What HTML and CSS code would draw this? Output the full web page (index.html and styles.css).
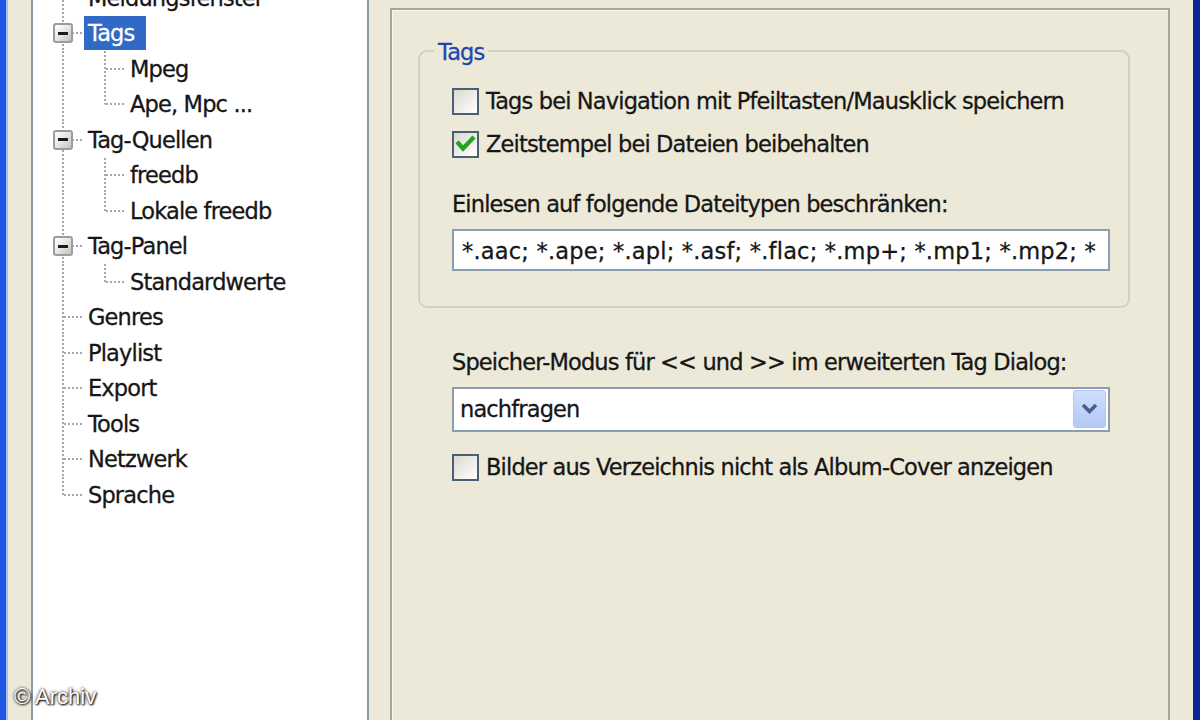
FILE: index.html
```html
<!DOCTYPE html>
<html lang="de">
<head>
<meta charset="utf-8">
<title>Optionen - Tags</title>
<link rel="stylesheet" href="styles.css">
</head>
<body>
<div class="window">
  <div class="tree">
    <div class="row"><span class="cell tee"></span><span class="label">Meldungsfenster</span></div>
    <div class="row"><span class="cell tee"><span class="exp"></span></span><span class="label sel">Tags</span></div>
    <div class="row"><span class="cell v"></span><span class="cell tee"></span><span class="label">Mpeg</span></div>
    <div class="row"><span class="cell v"></span><span class="cell end"></span><span class="label">Ape, Mpc ...</span></div>
    <div class="row"><span class="cell tee"><span class="exp"></span></span><span class="label">Tag-Quellen</span></div>
    <div class="row"><span class="cell v"></span><span class="cell tee"></span><span class="label">freedb</span></div>
    <div class="row"><span class="cell v"></span><span class="cell end"></span><span class="label">Lokale freedb</span></div>
    <div class="row"><span class="cell tee"><span class="exp"></span></span><span class="label">Tag-Panel</span></div>
    <div class="row"><span class="cell v"></span><span class="cell end"></span><span class="label">Standardwerte</span></div>
    <div class="row"><span class="cell tee"></span><span class="label">Genres</span></div>
    <div class="row"><span class="cell tee"></span><span class="label">Playlist</span></div>
    <div class="row"><span class="cell tee"></span><span class="label">Export</span></div>
    <div class="row"><span class="cell tee"></span><span class="label">Tools</span></div>
    <div class="row"><span class="cell tee"></span><span class="label">Netzwerk</span></div>
    <div class="row"><span class="cell end"></span><span class="label">Sprache</span></div>
  </div>

  <div class="panel">
    <div class="group">
      <div class="legend">Tags</div>
      <div class="check-row"><span class="chk"></span><span class="check-text">Tags bei Navigation mit Pfeiltasten/Mausklick speichern</span></div>
      <div class="check-row"><span class="chk"><svg class="tick" viewBox="0 0 27 27" width="27" height="27"><polyline points="6.5,12.5 11,17.5 20.5,7.5" fill="none" stroke="#22a322" stroke-width="4.4" stroke-linecap="square"/></svg></span><span class="check-text">Zeitstempel bei Dateien beibehalten</span></div>
      <div class="field-label first">Einlesen auf folgende Dateitypen beschränken:</div>
      <div class="textbox">*.aac; *.ape; *.apl; *.asf; *.flac; *.mp+; *.mp1; *.mp2; *</div>
    </div>

    <div class="lower">
      <div class="field-label">Speicher-Modus für &lt;&lt; und &gt;&gt; im erweiterten Tag Dialog:</div>
      <div class="combo">
        <span class="combo-text">nachfragen</span>
        <span class="combo-btn"><svg viewBox="0 0 33 38" width="33" height="38"><polyline points="10,15 16.5,21.5 23,15" fill="none" stroke="#4a5f88" stroke-width="3.6"/></svg></span>
      </div>
      <div class="check-row"><span class="chk"></span><span class="check-text">Bilder aus Verzeichnis nicht als Album-Cover anzeigen</span></div>
    </div>
  </div>

  <div class="watermark">© Archiv</div>
</div>
</body>
</html>
```

FILE: styles.css
```css
html, body {
  margin: 0;
  padding: 0;
}

body {
  width: 1200px;
  height: 720px;
  overflow: hidden;
  background: #ece9d8;
  font-family: "DejaVu Sans", "Noto Sans", sans-serif;
  font-size: 22.5px;
  letter-spacing: -0.85px;
  color: #161616;
  -webkit-text-stroke: 0.3px currentColor;
}

.window {
  position: relative;
  display: flex;
  align-items: flex-start;
  width: 1200px;
  height: 720px;
  box-sizing: border-box;
  overflow: hidden;
  background: #ece9d8;
  border-left: 6px solid #1d56e3;
  border-right: 7px solid #0b2596;
  box-shadow: inset 2px 0 0 #a9bff3;
}

/* ---------- tree ---------- */
.tree {
  flex: none;
  width: 338px;
  height: 800px;
  margin-left: 25px;
  margin-top: -22px;
  box-sizing: border-box;
  border: 2px solid #8e99a6;
  background: #ffffff;
  padding-left: 9px;
}

.row {
  display: flex;
  align-items: center;
  height: 35.5px;
}

.cell {
  flex: none;
  width: 42px;
  height: 100%;
  display: flex;
  align-items: center;
  justify-content: center;
}

.cell.v {
  background: repeating-linear-gradient(to bottom, #a8a8a8 0 2px, transparent 2px 4px) 20px 0 / 2px 100% no-repeat;
}

.cell.tee {
  background:
    repeating-linear-gradient(to right, #a8a8a8 0 2px, transparent 2px 4px) 22px 50% / 20px 2px no-repeat,
    repeating-linear-gradient(to bottom, #a8a8a8 0 2px, transparent 2px 4px) 20px 0 / 2px 100% no-repeat;
}

.cell.end {
  background:
    repeating-linear-gradient(to right, #a8a8a8 0 2px, transparent 2px 4px) 22px 50% / 20px 2px no-repeat,
    repeating-linear-gradient(to bottom, #a8a8a8 0 2px, transparent 2px 4px) 20px 0 / 2px 50% no-repeat;
}

.exp {
  width: 20px;
  height: 20px;
  box-sizing: border-box;
  border: 2px solid #949ea8;
  border-radius: 3px;
  background: linear-gradient(135deg, #ffffff 0%, #e8e6de 50%, #c6c2b5 100%);
  display: flex;
  align-items: center;
  justify-content: center;
}

.exp::after {
  content: "";
  width: 10px;
  height: 3px;
  background: #1b1b1b;
}

.label {
  height: 34px;
  line-height: 34px;
  padding: 0 12px 0 4px;
  white-space: nowrap;
}

.label.sel {
  background: #3169c6;
  color: #ffffff;
}

/* ---------- right panel ---------- */
.panel {
  flex: none;
  width: 780px;
  height: 760px;
  margin-left: 21px;
  margin-top: 8px;
  box-sizing: border-box;
  border: 2px solid #a9a699;
  box-shadow: inset 1px 1px 0 #f8f6ee;
}

.group {
  width: 712px;
  box-sizing: border-box;
  margin: 40px 0 0 26px;
  border: 2px solid #d3d0bf;
  border-radius: 9px;
  padding: 0 18px 35px 32px;
}

.legend {
  width: fit-content;
  margin: -15px 0 12.5px -18px;
  padding: 0 4px;
  line-height: 30px;
  background: #ece9d8;
  color: #2147ae;
}

.check-row {
  display: flex;
  align-items: center;
  gap: 7px;
  height: 43px;
}

.chk {
  flex: none;
  width: 27px;
  height: 27px;
  box-sizing: border-box;
  border: 2px solid #4a5f74;
  background: linear-gradient(135deg, #d9d8d0 0%, #f1f0ea 60%, #ffffff 100%);
}

.tick {
  display: block;
  margin: -2px;
}

.check-text {
  white-space: nowrap;
}

.field-label {
  line-height: 30px;
  white-space: nowrap;
}

.field-label.first {
  margin-top: 23.5px;
}

.textbox {
  margin-top: 10px;
  height: 42px;
  box-sizing: border-box;
  border: 2px solid #8a9db3;
  background: #ffffff;
  padding-left: 8px;
  padding-top: 1px;
  line-height: 38px;
  letter-spacing: 0.2px;
  white-space: nowrap;
  overflow: hidden;
}

.lower {
  width: 658px;
  margin: 38.5px 0 0 60px;
}

.combo {
  margin-top: 10px;
  height: 45px;
  box-sizing: border-box;
  border: 2px solid #8a9db3;
  background: #ffffff;
  display: flex;
  align-items: center;
  justify-content: space-between;
  margin-bottom: 14px;
}

.combo-text {
  padding-left: 6px;
  line-height: 40px;
}

.combo-btn {
  flex: none;
  width: 33px;
  height: 38px;
  margin-right: 2px;
  box-sizing: border-box;
  border: 1px solid #b3c6f1;
  border-radius: 3px;
  background: linear-gradient(180deg, #d2dffc 0%, #c1d3fa 50%, #b3c8f5 100%);
}

.combo-btn svg {
  display: block;
  margin: -1px;
}

/* ---------- overlay ---------- */
.watermark {
  position: absolute;
  left: 8px;
  bottom: 10px;
  font-family: "Liberation Sans", Arial, sans-serif;
  font-size: 22px;
  letter-spacing: 0;
  line-height: 26px;
  color: #ffffff;
  -webkit-text-stroke: 0;
  text-shadow: 0 0 3px rgba(0, 0, 0, 0.95), 1px 1px 2px #000000;
}
```
